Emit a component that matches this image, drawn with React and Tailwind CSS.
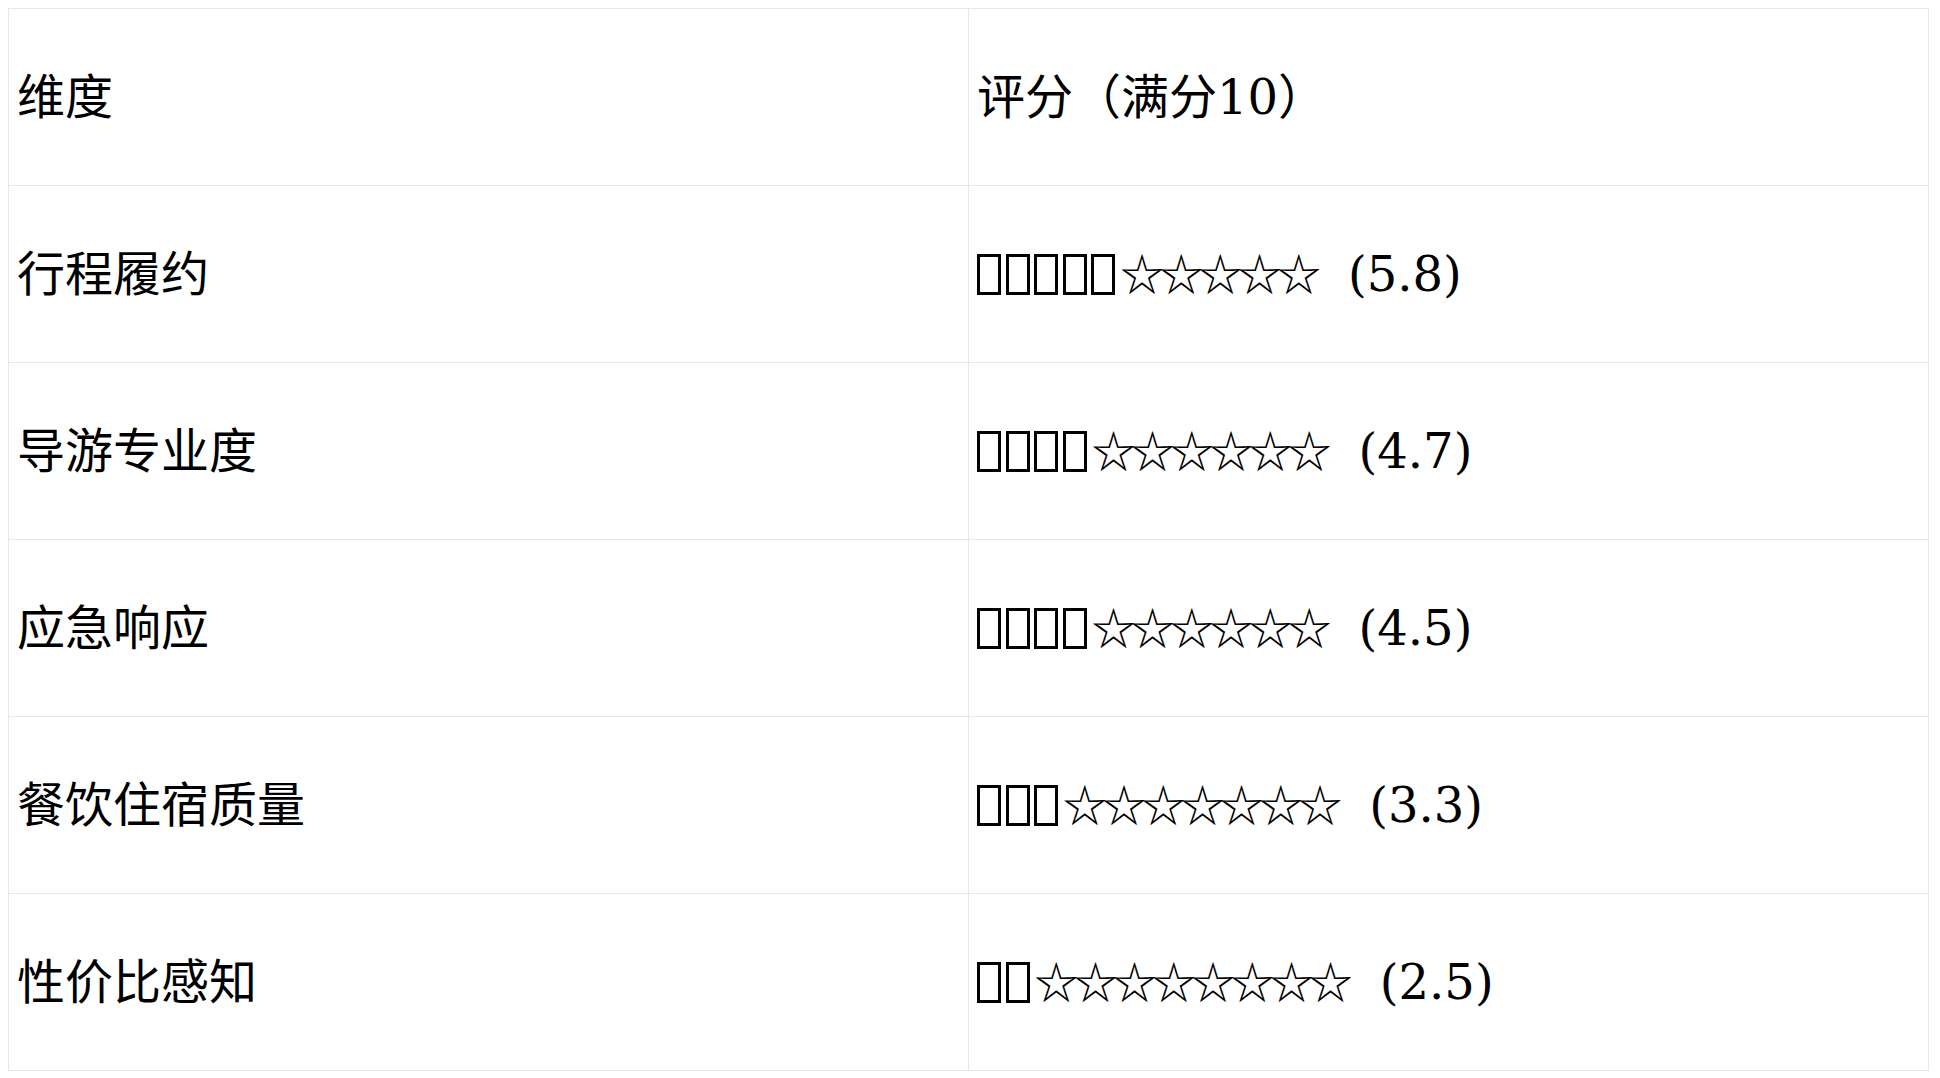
import React from 'react';

const rows = [
  { name: '行程履约', full: 5, empty: 5, score: '5.8' },
  { name: '导游专业度', full: 4, empty: 6, score: '4.7' },
  { name: '应急响应', full: 4, empty: 6, score: '4.5' },
  { name: '餐饮住宿质量', full: 3, empty: 7, score: '3.3' },
  { name: '性价比感知', full: 2, empty: 8, score: '2.5' },
];

// missing-glyph boxes, as the filled stars show in the screenshot
function Tofu() {
  return <span className="inline-block w-[24px] h-[41px] mr-[4.6px] border-[3px] border-black align-[-4px]" />;
}

function App() {
  return (
    <div className="p-2 bg-white min-h-screen">
      <table
        className="w-[1921px] border-collapse text-[48px] text-black"
        style={{ fontFamily: '"DejaVu Serif", "Noto Sans CJK SC", serif' }}
      >
        <thead>
          <tr className="h-[177px]">
            <th className="w-[960px] border border-[#e5e7eb] px-2 text-left font-normal align-middle">维度</th>
            <th className="border border-[#e5e7eb] px-2 text-left font-normal align-middle">评分（满分10）</th>
          </tr>
        </thead>
        <tbody>
          {rows.map((r) => (
            <tr key={r.name} className="h-[177px]">
              <td className="border border-[#e5e7eb] px-2 align-middle">{r.name}</td>
              <td className="border border-[#e5e7eb] px-2 align-middle">
                {Array.from({ length: r.full }).map((_, i) => (
                  <Tofu key={i} />
                ))}
                <span className="text-[44px] tracking-[-4.8px]" style={{ fontFamily: '"Noto Sans CJK SC", sans-serif' }}>
                  {'☆'.repeat(r.empty)}
                </span>
                <span className="ml-[32px]">({r.score})</span>
              </td>
            </tr>
          ))}
        </tbody>
      </table>
    </div>
  );
}

export default App;
